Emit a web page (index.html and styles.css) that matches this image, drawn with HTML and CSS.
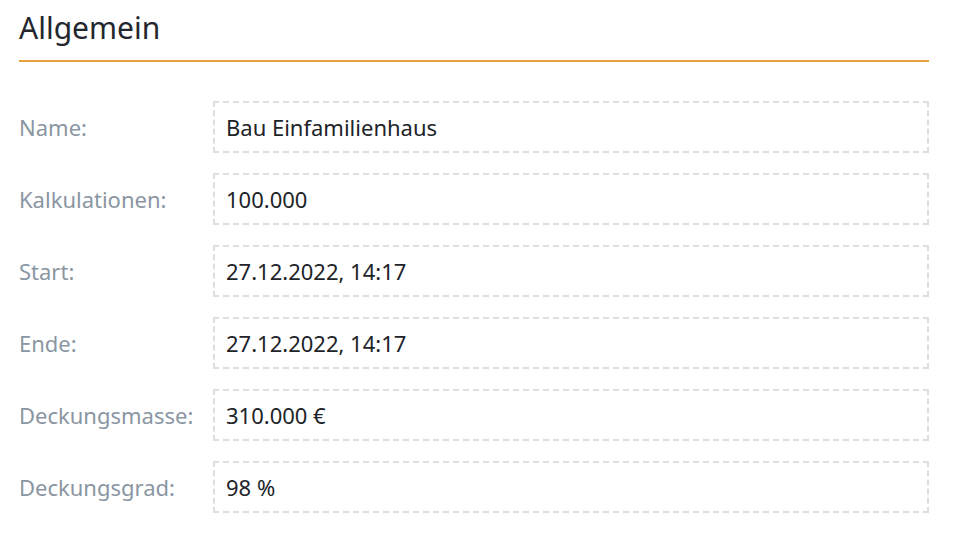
FILE: index.html
```html
<!DOCTYPE html>
<html lang="de">
<head>
<meta charset="utf-8">
<title>Allgemein</title>
<link rel="stylesheet" href="styles.css">
</head>
<body>
<section class="panel">
  <h2 class="title">Allgemein</h2>
  <div class="fields">
    <div class="row"><span class="label">Name:</span><div class="value">Bau Einfamilienhaus</div></div>
    <div class="row"><span class="label">Kalkulationen:</span><div class="value">100.000</div></div>
    <div class="row"><span class="label">Start:</span><div class="value">27.12.2022, 14:17</div></div>
    <div class="row"><span class="label">Ende:</span><div class="value">27.12.2022, 14:17</div></div>
    <div class="row"><span class="label">Deckungsmasse:</span><div class="value">310.000 €</div></div>
    <div class="row"><span class="label">Deckungsgrad:</span><div class="value">98 %</div></div>
  </div>
</section>
</body>
</html>
```

FILE: styles.css
```css
html, body {
  margin: 0;
  padding: 0;
  background: #ffffff;
}
body {
  font-family: "Noto Sans", "Open Sans", sans-serif;
  color: #222831;
}
.panel {
  width: 910px;
  margin-left: 19px;
}
.title {
  margin: 0;
  font-size: 30px;
  font-weight: 400;
  line-height: 42px;
  padding-top: 7px;
  padding-bottom: 11px;
  border-bottom: 2px solid #e1a33a;
  color: #23272d;
}
.fields {
  display: flex;
  flex-direction: column;
  gap: 20px;
  padding-top: 39px;
}
.row {
  display: flex;
  align-items: center;
}
.label {
  width: 194px;
  flex: none;
  font-size: 22px;
  color: #8a96a2;
}
.value {
  flex: 1;
  box-sizing: border-box;
  height: 52px;
  border: 2px dashed #dedede;
  padding: 0 11px;
  display: flex;
  align-items: center;
  font-size: 22px;
  color: #202328;
}
```
